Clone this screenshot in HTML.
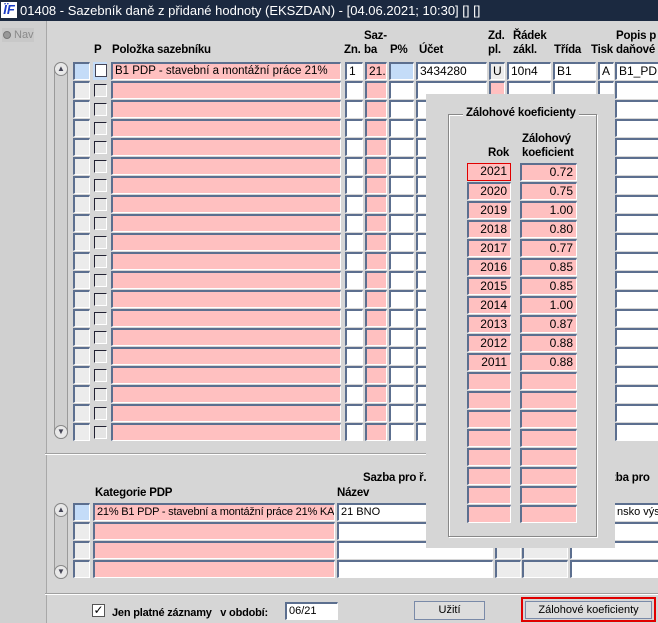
<!DOCTYPE html>
<html><head><meta charset="utf-8">
<style>
*{box-sizing:border-box;margin:0;padding:0}
body{width:658px;height:623px;overflow:hidden;background:#d6d6d6;font-family:"Liberation Sans",Arial,sans-serif;font-size:12px;position:relative;color:#000}
.a{position:absolute}
.c{position:absolute;border-top:2px solid #5c6f8f;border-left:2px solid #5c6f8f;border-bottom:1px solid #fff;border-right:1px solid #fff;overflow:hidden;white-space:nowrap;padding-left:2px;line-height:15px;font-size:12px}
.p{background:#ffc0c0}.w{background:#fff}.g{background:#ececec}.b{background:#c4dcf8}.d{background:#e4e4e4}
.h{position:absolute;font-weight:bold;font-size:11.5px;line-height:14px;letter-spacing:-0.2px;white-space:nowrap}
.r{text-align:right;padding-right:3px}
</style></head><body>
<div class="a" style="left:0;top:0;width:658px;height:21px;background:#1b2940;color:#fff;font-size:13px;line-height:21px;padding-left:20px">01408 - Sazebník daně z přidané hodnoty (EKSZDAN) - [04.06.2021; 10:30] [] []</div>
<div class="a" style="left:1px;top:2px;width:16px;height:16px;background:#fff;color:#1a3cc8;font-weight:bold;font-style:italic;font-size:13px;line-height:16px;text-align:center">ÏF</div>
<div class="a" style="left:0;top:21px;width:47px;height:602px;background:#d0d0d0;border-right:1px solid #a8a8a8"></div>
<div class="a" style="left:2px;top:28px;width:32px;height:14px;background:#c8c8c8;color:#8a8a8a;font-size:11px;line-height:14px;padding-left:12px">Nav</div>
<div class="a" style="left:3px;top:31px;width:8px;height:8px;border-radius:50%;background:#999;border:1px solid #777"></div>

<div class="h" style="left:94px;top:43px">P</div>
<div class="h" style="left:112px;top:43px">Položka sazebníku</div>
<div class="h" style="left:364px;top:29px">Saz-</div>
<div class="h" style="left:344px;top:43px">Zn.</div><div class="h" style="left:364px;top:43px">ba</div>
<div class="h" style="left:390px;top:43px">P%</div>
<div class="h" style="left:419px;top:43px">Účet</div>
<div class="h" style="left:488px;top:29px">Zd.</div><div class="h" style="left:488px;top:43px">pl.</div>
<div class="h" style="left:513px;top:29px">Řádek</div><div class="h" style="left:513px;top:43px">zákl.</div>
<div class="h" style="left:554px;top:43px">Třída</div>
<div class="h" style="left:591px;top:43px">Tisk</div>
<div class="h" style="left:616px;top:29px">Popis p</div><div class="h" style="left:616px;top:43px">daňové</div>

<div class="a" style="left:54px;top:62px;width:14px;height:377px;background:#cfcfcf;border:1px solid #9a9a9a;border-radius:7px"></div>
<div class="a" style="left:54px;top:62px;width:14px;height:14px;border:1px solid #888;border-radius:7px;background:#e8e8e8;font-size:8px;line-height:12px;text-align:center;color:#445">▲</div>
<div class="a" style="left:54px;top:425px;width:14px;height:14px;border:1px solid #888;border-radius:7px;background:#e8e8e8;font-size:8px;line-height:12px;text-align:center;color:#445">▼</div>

<div id="top"></div>
<div class="a" style="left:45px;top:453px;width:381px;height:2px;border-top:1px solid #a0a0a0;border-bottom:1px solid #fff"></div>

<div class="h" style="left:363px;top:471px">Sazba pro ř.</div>
<div class="h" style="left:604px;top:471px">azba pro</div>
<div class="h" style="left:95px;top:486px">Kategorie PDP</div>
<div class="h" style="left:337px;top:486px">Název</div>
<div class="a" style="left:54px;top:503px;width:14px;height:76px;background:#cfcfcf;border:1px solid #9a9a9a;border-radius:7px"></div>
<div class="a" style="left:54px;top:503px;width:14px;height:14px;border:1px solid #888;border-radius:7px;background:#e8e8e8;font-size:8px;line-height:12px;text-align:center;color:#445">▲</div>
<div class="a" style="left:54px;top:565px;width:14px;height:14px;border:1px solid #888;border-radius:7px;background:#e8e8e8;font-size:8px;line-height:12px;text-align:center;color:#445">▼</div>
<div id="bot"></div>

<div class="a" style="left:45px;top:593px;width:613px;height:2px;border-top:1px solid #a0a0a0;border-bottom:1px solid #fff"></div>
<div class="a" style="left:92px;top:604px;width:13px;height:13px;background:#fff;border:1px solid #555;font-size:12px;line-height:11px;text-align:center">✓</div>
<div class="h" style="left:112px;top:606px;font-size:11px">Jen platné záznamy &nbsp; v období:</div>
<div class="c w" style="left:285px;top:602px;width:53px;height:18px;font-size:11px">06/21</div>
<div class="a" style="left:414px;top:601px;width:71px;height:19px;border:1px solid #7a8aa8;background:#ddd;text-align:center;line-height:17px;font-size:11px">Užití</div>
<div class="a" style="left:521px;top:597px;width:135px;height:25px;border:2px solid #e00000"></div>
<div class="a" style="left:525px;top:601px;width:127px;height:18px;border:1px solid #7a8aa8;background:#ddd;text-align:center;line-height:16px;font-size:11px">Zálohové koeficienty</div>

<div class="a" style="left:426px;top:94px;width:189px;height:454px;background:#d6d6d6"></div>
<div class="a" style="left:448px;top:114px;width:149px;height:423px;border:1px solid #888;box-shadow:inset 1px 1px 0 #fff,1px 1px 0 #fff"></div>
<div class="h" style="left:463px;top:106px;background:#d6d6d6;padding:0 3px">Zálohové koeficienty</div>
<div class="h" style="left:522px;top:132px">Zálohový</div>
<div class="h" style="left:488px;top:146px">Rok</div>
<div class="h" style="left:522px;top:146px">koeficient</div>
<div id="pop"></div>

<script>
function c(p,x,y,w,h,cls,t,st){var d=document.createElement('div');d.className='c '+cls;d.style.cssText='left:'+x+'px;top:'+y+'px;width:'+w+'px;height:'+h+'px;'+(st||'');d.textContent=t||'';p.appendChild(d);return d}
var T=document.getElementById('top');
for(var i=0;i<20;i++){var y=62+i*19,f=i==0;
 c(T,73,y,17,18,f?'b':'g');
 if(f){c(T,93,y,14,18,'w','','border:none;background:#c4dcf8');c(T,95,y+2,12,13,'w','','border:1px solid #445')}
 else c(T,94,y+3,13,13,'d','','border-top:1px solid #223;border-left:1px solid #223;border-bottom:1px solid #fff;border-right:1px solid #fff');
 c(T,111,y,230,18,'p',f?'B1  PDP - stavební a montážní práce 21%':'','font-size:11.5px');
 c(T,345,y,18,18,'w',f?'1':'');
 c(T,365,y,22,18,'p',f?'21.0':'');
 c(T,389,y,25,18,f?'b':'w');
 c(T,416,y,71,18,'w',f?'3434280':'');
 c(T,489,y,16,18,f?'g':'p',f?'U':'');
 c(T,507,y,44,18,'w',f?'10n4':'');
 c(T,553,y,43,18,'w',f?'B1':'');
 c(T,598,y,16,18,'w',f?'A':'');
 c(T,615,y,50,18,'w',f?'B1_PDP':'');
}
var B=document.getElementById('bot');
for(var i=0;i<4;i++){var y=503+i*19,f=i==0;
 c(B,73,y,17,18,f?'b':'g');
 c(B,93,y,242,18,'p',f?'21% B1  PDP - stavební a montážní práce 21% KA':'','font-size:11px;letter-spacing:-0.2px');
 c(B,337,y,156,18,'w',f?'21  BNO':'','font-size:11px');
 c(B,495,y,26,18,'g');c(B,522,y,46,18,'g');
 c(B,570,y,95,18,'w',f?'nsko výst':'','font-size:11px;padding-left:45px');
}
var P=document.getElementById('pop');
var yr=['2021','2020','2019','2018','2017','2016','2015','2014','2013','2012','2011'];
var kf=['0.72','0.75','1.00','0.80','0.77','0.85','0.85','1.00','0.87','0.88','0.88'];
for(var i=0;i<19;i++){var y=163+i*19;
 var a=c(P,467,y,44,18,'p r',yr[i]||'');
 if(i==0)a.style.cssText+='border:1px solid #e00000';
 c(P,520,y,57,18,'p r',kf[i]||'');
}
</script>
</body></html>
